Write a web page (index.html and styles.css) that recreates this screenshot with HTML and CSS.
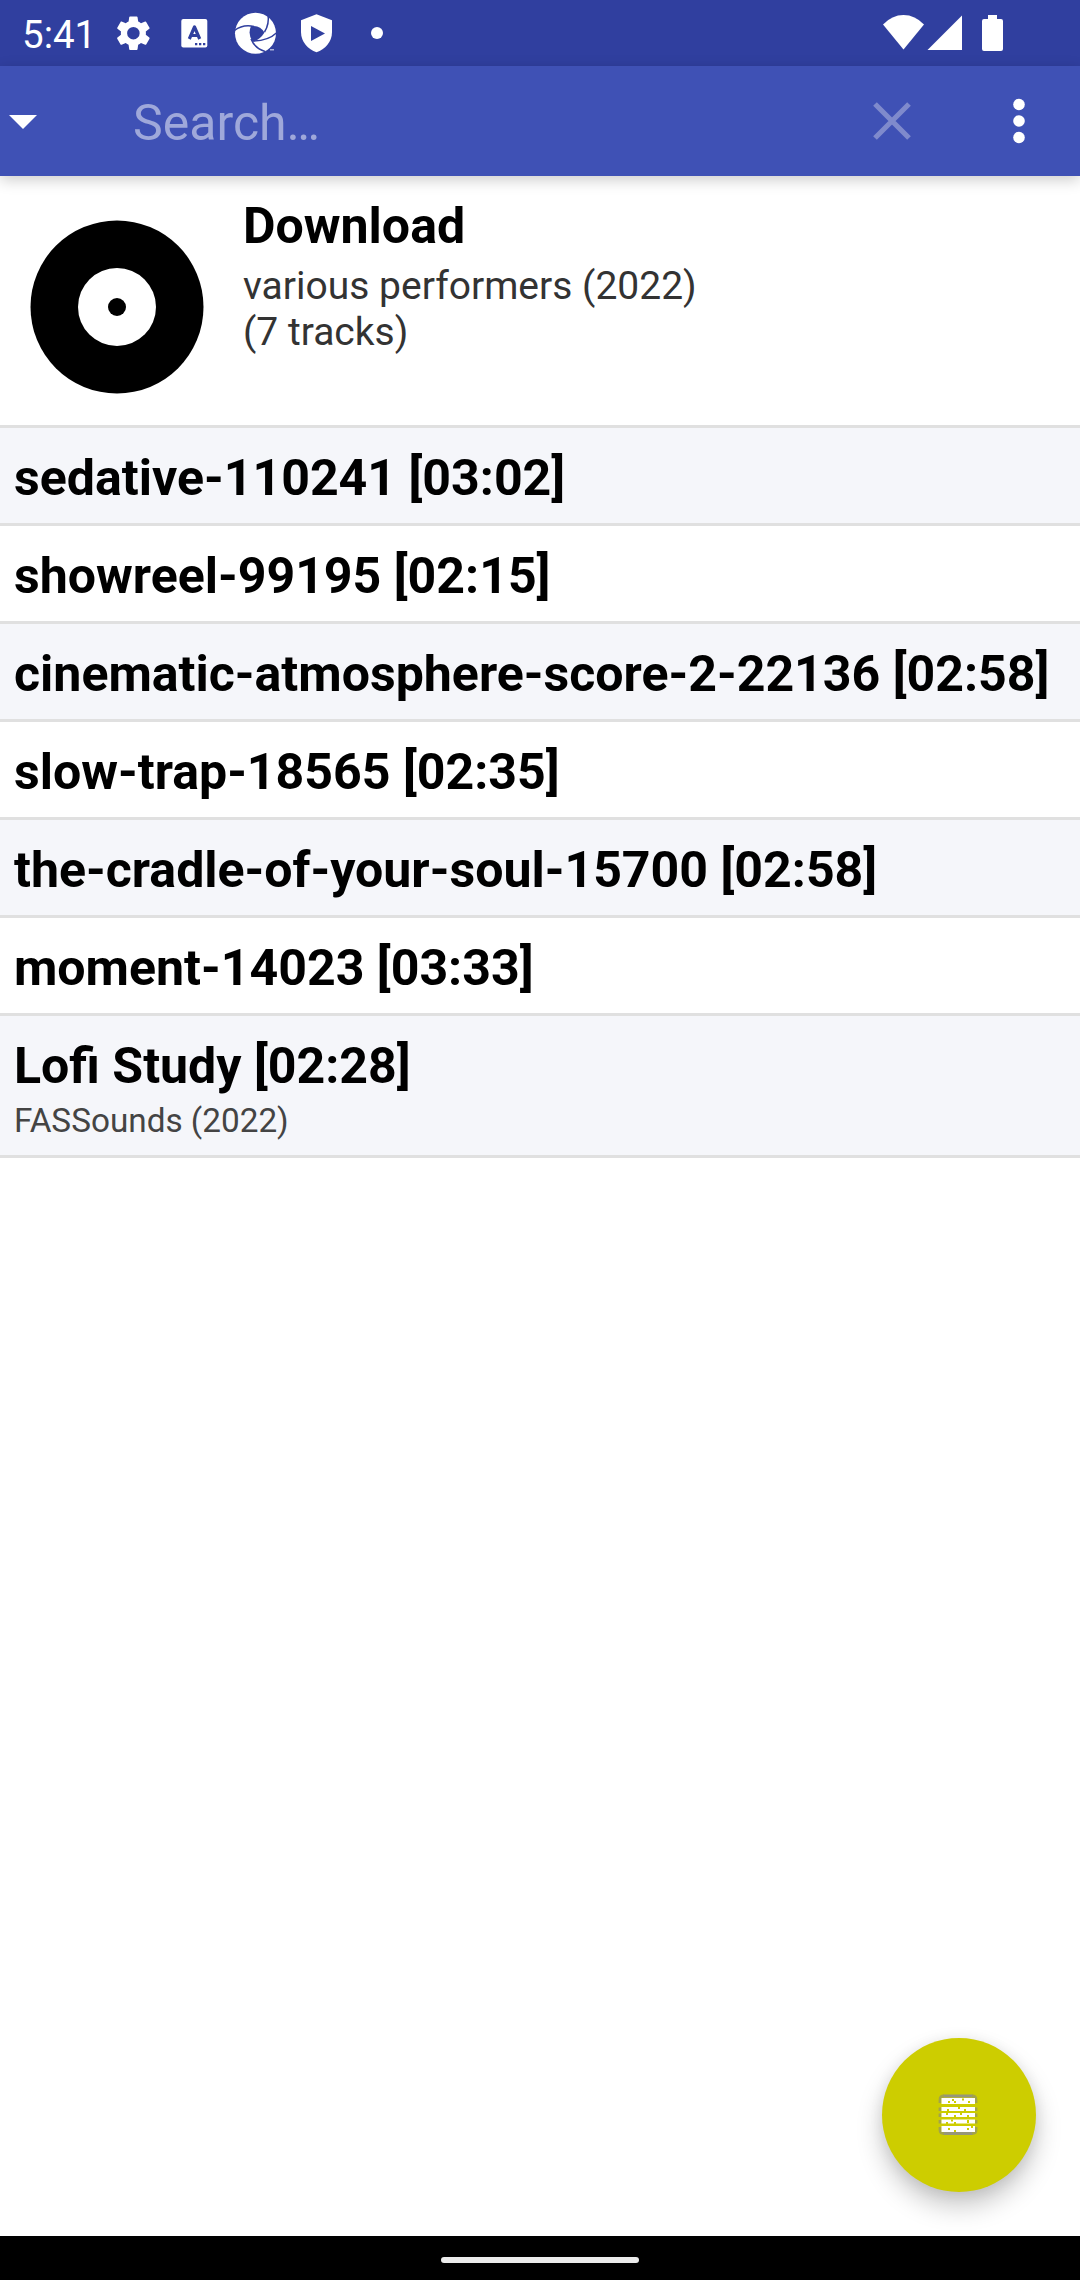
FILE: index.html
```html
<!DOCTYPE html>
<html lang="en">
<head>
<meta charset="utf-8">
<title>Music library</title>
<link rel="stylesheet" href="styles.css">
</head>
<body>
<div class="screen">
  <div class="status">
    <span class="clock">5:41</span>
    <svg class="status-icons" width="300" height="66" viewBox="100 0 300 66" fill="#fff">
      <g transform="translate(112.500 12.300) scale(1.74)">
        <path d="M19.14 12.94c.04-.3.06-.61.06-.94s-.02-.64-.07-.94l2.03-1.58a.49.49 0 0 0 .12-.61l-1.92-3.32a.488.488 0 0 0-.59-.22l-2.39.96c-.5-.38-1.03-.7-1.62-.94l-.36-2.54a.484.484 0 0 0-.48-.41h-3.84c-.24 0-.43.17-.47.41l-.36 2.54c-.59.24-1.13.57-1.62.94l-2.39-.96c-.22-.08-.47 0-.59.22L2.74 8.87c-.12.21-.08.47.12.61l2.03 1.58c-.05.3-.09.63-.09.94s.02.64.07.94l-2.03 1.58a.49.49 0 0 0-.12.61l1.92 3.32c.12.22.37.29.59.22l2.39-.96c.5.38 1.03.7 1.62.94l.36 2.54c.05.24.24.41.48.41h3.84c.24 0 .44-.17.47-.41l.36-2.54c.59-.24 1.13-.56 1.62-.94l2.39.96c.22.08.47 0 .59-.22l1.92-3.32c.12-.22.07-.47-.12-.61l-2.01-1.58zM12 15.6A3.6 3.6 0 1 1 12 8.400a3.6 3.6 0 0 1 0 7.2z"/>
      </g>
      <rect x="181.300" y="19" width="26" height="28.500" rx="2"/>
      <path d="M189.300 39L194.500 27L199.700 39M191.500 35.500H197.500" fill="none" stroke="#303F9F" stroke-width="3.200" stroke-linejoin="round"/>
      <path d="M195 43h2.300v2.300H195zM199 43h2.300v2.300H199zM203 43h2.300v2.300H203z" fill="#303F9F"/>
      <circle cx="255.500" cy="33.300" r="20.500"/>
      <g fill="none" stroke="#303F9F" stroke-width="1.500">
        <path d="M234.500 30.500Q243 24 254 26.500"/>
        <path d="M268 14.500Q269.500 24 264.500 32"/>
        <path d="M277 32.500Q268 41 253 41"/>
        <path d="M265 51.500Q254.500 48 251 39"/>
      </g>
      <path d="M251 26Q260 25 264.500 32.500Q260 40 252.500 41.500Q247.500 34 251 26Z" fill="#303F9F"/>
      <path d="M270 49h4v1.500h-4z" opacity=".6"/>
      <path d="M316.500 14.300L332 20.300V32C332 42 325 49.500 316.500 52.200C308 49.500 301 42 301 32V20.300Z"/>
      <path d="M311 26V41L325 33.500Z" fill="#303F9F"/>
      <circle cx="377" cy="33" r="6"/>
    </svg>
    <svg class="system-icons" width="140" height="66" viewBox="880 0 140 66" fill="#fff">
      <path d="M883 24.500Q892 15 903.500 15T924 24.500L903.500 49.500Z"/>
      <path d="M927.500 50L962 15.500V50Z"/>
      <path d="M988 15h9v4h4a2 2 0 0 1 2 2v28a2 2 0 0 1-2 2h-17a2 2 0 0 1-2-2v-28a2 2 0 0 1 2-2h4z"/>
    </svg>
  </div>
  <div class="toolbar">
    <svg class="dropdown" width="28" height="14" viewBox="0 0 28 14"><path d="M0 0H28L14 14Z" fill="#fff"/></svg>
    <span class="search">Search…</span>
    <svg class="clear" width="38" height="38" viewBox="0 0 38 38"><path d="M2 2L36 36M36 2L2 36" stroke="#7F8ACC" stroke-width="5.200"/></svg>
    <svg class="more" width="12" height="46" viewBox="0 0 12 46" fill="#fff"><circle cx="6" cy="6.500" r="5.800"/><circle cx="6" cy="23" r="5.800"/><circle cx="6" cy="39.500" r="5.800"/></svg>
  </div>
  <div class="album">
    <svg class="disc" width="174" height="174" viewBox="0 0 174 174"><circle cx="87" cy="87" r="86.500"/><circle cx="87" cy="87" r="39" fill="#fff"/><circle cx="87" cy="87" r="9"/></svg>
    <div class="album-text">
      <div class="title">Download</div>
      <div class="album-sub">various performers (2022)<br>(7 tracks)</div>
    </div>
  </div>
  <div class="tracks">
    <div class="track"><div class="title">sedative-110241 [03:02]</div></div>
    <div class="track"><div class="title">showreel-99195 [02:15]</div></div>
    <div class="track"><div class="title">cinematic-atmosphere-score-2-22136 [02:58]</div></div>
    <div class="track"><div class="title">slow-trap-18565 [02:35]</div></div>
    <div class="track"><div class="title">the-cradle-of-your-soul-15700 [02:58]</div></div>
    <div class="track"><div class="title">moment-14023 [03:33]</div></div>
    <div class="track"><div class="title">Lofi Study [02:28]</div><div class="artist">FASSounds (2022)</div></div>
  </div>
  <div class="fab">
    <svg width="50" height="50" viewBox="0 0 50 50">
      <path d="M9 6H39M9 43.500H39" stroke="#96967A" stroke-width="3"/>
      <path d="M10 6Q6 6 6 10V13M38 6Q42 6 42 10V13M10 43.500Q6 43.500 6 40V37M38 43.500Q42 43.500 42 40V37M6 17.500V21M42 17.500V21M6 23.500V27M42 23.500V27M6 30V33.500M42 30V33.500" fill="none" stroke="#A3A34A" stroke-width="2.800"/>
      <path d="M7.500 8H41V14H7.500zM7.500 17H41V21H7.500zM7.500 23H41V27H7.500zM7.500 29.500H41V33.500H7.500zM7.500 36H41V42H7.500z" fill="#fff"/>
      <path d="M14 11h2v2h-2zM18 9h2v2h-2zM20 11h2v2h-2zM28 8.500h2v2h-2zM34 11h2v2h-2zM24 17h2v2h-2zM13 19h2v2h-2zM30 19h2v2h-2zM12 23h2v2h-2zM26 23h2v2h-2zM20 25h2v2h-2zM33 25h2v4h-2zM17 29.500h2v2h-2zM12 32h2v2h-2zM20 32h2v4h-2zM33 30h2v3h-2zM14 38h2v2h-2zM20 40h2v2h-2zM33 38h2v2h-2zM37 36h2v2h-2z" fill="#CDCD00"/>
    </svg>
  </div>
  <div class="navbar"><div class="pill"></div></div>
</div>
</body>
</html>
```
FILE: styles.css
```css
* { box-sizing: border-box; }
body { margin: 0; background: #fff; font-family: Roboto, sans-serif; }
svg { display: block; flex: none; }
.screen { position: relative; width: 1080px; height: 2280px; display: flex; flex-direction: column; overflow: hidden; }
.status { height: 66px; flex: none; display: flex; background: #303F9F; color: #fff; }
.clock { width: 100px; padding: 12px 0 0 22px; font-size: 38.5px; line-height: 45px; }
.system-icons { margin-left: 480px; }
.toolbar { position: relative; z-index: 1; height: 110px; flex: none; display: flex; align-items: center; padding-left: 9px; background: #3F51B5; box-shadow: 0 4px 14px rgba(0, 0, 0, .2); }
.dropdown { margin-top: 2px; }
.search { width: 740px; margin: 3px 0 0 96px; color: #9FA8DA; font-size: 50px; line-height: 58px; }
.clear { margin-right: 102px; }
.album { height: 252px; flex: none; display: flex; border-bottom: 3px solid #E0E0E0; }
.disc { margin: 44px 39px 0 30px; }
.album-text { padding-top: 21px; }
.title { color: #000; font-size: 50.07px; font-weight: 700; line-height: 58px; white-space: nowrap; }
.album-sub { margin-top: 8px; color: #333; font-size: 39px; line-height: 46px; }
.tracks { flex: 1; }
.track { padding: 21px 14px 16px; border-bottom: 3px solid #E0E0E0; }
.track:nth-child(odd) { background: #F5F6FA; }
.artist { padding-top: 7px; color: #444; font-size: 33.3px; line-height: 37px; }
.fab { position: absolute; left: 882px; top: 2038px; width: 154px; height: 154px; display: flex; align-items: center; justify-content: center; border-radius: 50%; background: #CDCD00; box-shadow: 0 14px 26px rgba(0, 0, 0, .22), 0 2px 14px rgba(0, 0, 0, .08); }
.navbar { height: 44px; flex: none; display: flex; align-items: center; justify-content: center; background: #000; }
.pill { width: 198px; height: 6px; margin-top: 4px; border-radius: 3px; background: #EBEBEB; }
```
